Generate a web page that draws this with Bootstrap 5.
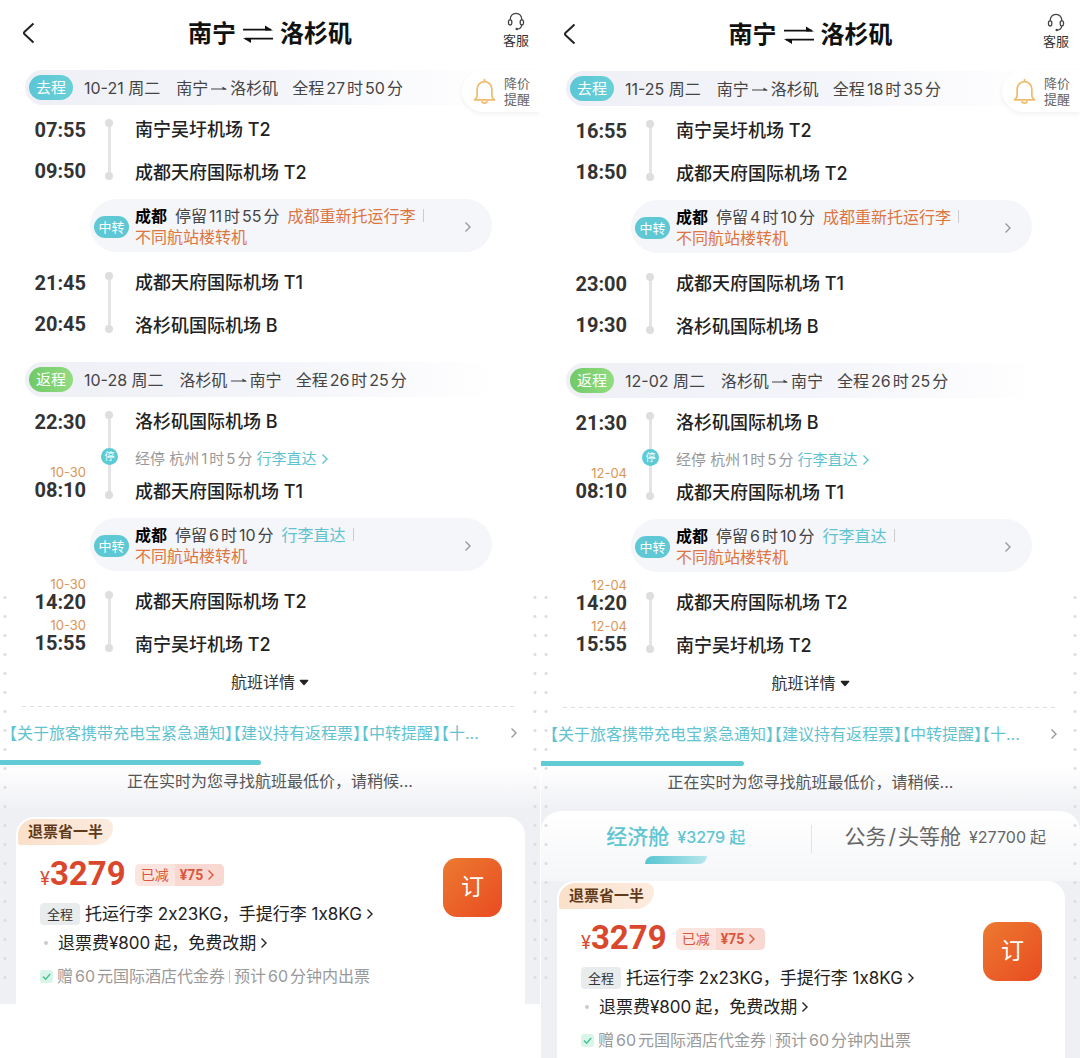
<!DOCTYPE html>
<html lang="zh-CN">
<head>
<meta charset="utf-8">
<meta name="viewport" content="width=device-width, initial-scale=1">
<title>南宁 ⇌ 洛杉矶</title>
<link href="https://cdn.jsdelivr.net/npm/bootstrap@5.3.0/dist/css/bootstrap.min.css" rel="stylesheet">
<style>
body{font-family:Inter,"Noto Sans CJK SC",sans-serif;font-size:16px;line-height:24px;color:#222;background:#fff}
a{color:inherit;text-decoration:none}
button{border:0;background:none;padding:0;color:inherit}
svg{display:block;flex:none}
.panel{overflow:hidden}
.panel-b{padding-top:1px;border-left:1px solid #fff}
.topbar{height:70px;padding:0 0 4px 22px}
.topbar h1{top:18px;gap:7px;font-size:24px;line-height:32px;font-weight:700;color:#111}
.service{right:11px;top:12px;font-size:13px;line-height:18px;color:#333}
.seg{height:35px;margin-left:25px;padding-left:4px;border-radius:18px 0 0 18px;background:linear-gradient(90deg,#eff0f6,#f4f5fa 50%,#fff 92%);color:#444}
.seg-tag{width:44px;height:25px;border-radius:13px;line-height:25px;font-size:15px;color:#fff;text-align:center;margin-right:11px}
.go{background:linear-gradient(90deg,#5cc6d6,#69d0d6)}
.back{background:linear-gradient(90deg,#70c968,#93dc80)}
.route{gap:3px;margin:0 14px 0 16px}
.n{margin:0 2px}
.alert-btn{right:0;top:70px;width:78px;height:42px;padding-left:11px;gap:8px;border-radius:21px 0 0 21px;background:#fff;box-shadow:0 2px 5px rgba(0,0,0,.06);font-size:13px;line-height:16px;color:#666}
.leg{margin-top:12px;min-height:69px}
.times{width:86px;padding:3px 0 5px;text-align:right}
.clock{font-family:Roboto,sans-serif;font-size:20px;line-height:20px;font-weight:700;color:#333}
.nextday{margin-top:-16px;font-size:13px;line-height:16px;color:#dc9556;display:block}
.rail{width:46px;padding:2px 0 6px}
.rail-line{width:3px;background:#e4e4e6}
.rail i{position:absolute;left:50%;width:8px;height:8px;margin-left:-4px;border-radius:50%;background:#dedee0}
.rail .dot-a{top:0}.rail .dot-b{bottom:0}
.rail .stop{top:37px;width:17px;height:17px;margin-left:-8px;background:#5bcbd6;color:#fff;font-style:normal;font-size:10px;line-height:17px;text-align:center}
.ports{padding-left:3px;font-size:18px;line-height:26px;font-weight:500;color:#222}
.via{font-size:15px;line-height:20px;font-weight:400;color:#999;margin:14px 0 10px}
.cy{color:#5fc3d0}
.or{color:#dd7540}
.grey-ic{color:#999}
.transfer{margin:13px 48px 0 90px;min-height:53px;padding:6px 20px 4px 4px;border-radius:27px;background:#f5f6fa;line-height:21px;color:#444}
.transfer+.leg{margin-top:18px}
.leg+.seg{margin-top:23px}
.t-tag{width:35px;height:22px;border-radius:11px;background:#5ec8d5;color:#fff;font-size:13px;line-height:22px;text-align:center;margin-right:6px}
.vr-thin{width:1px;height:13px;background:#ccc;display:inline-block;margin-left:7px}
.details{margin-top:14px;line-height:20px;color:#333}
.dash{height:1px;margin:14px 22px 0;background:repeating-linear-gradient(90deg,#ddd 0 4px,transparent 4px 8px)}
.notice{margin-top:14px;padding:0 22px 0 9px;font-feature-settings:"halt";white-space:nowrap}
.bar-track{height:5px;margin-top:15px;border-radius:0;background:none}
.bar-track .progress-bar{background:#62cbd5;border-radius:0 3px 3px 0}
.results{background:linear-gradient(#fff,#eff0f4 46px)}
.loading{margin-top:4px;color:#555}
.perf{background-image:radial-gradient(circle,#dcdde2 1px,transparent 2px),radial-gradient(circle,#dcdde2 1px,transparent 2px);background-size:8px 19px;background-repeat:repeat-y;background-position:1px 0,calc(100% - 1px) 0;top:588px;height:400px;left:0;right:0;pointer-events:none}
.fare{margin:0 15px 0 16px;padding:2px 23px 16px 24px;border-radius:18px 18px 0 0;background:#fff}
.panel-b .fare{padding-bottom:6px}
.fare-tag{margin-left:-22px;width:95px;height:26px;padding-left:10px;border-radius:16px 8px 18px 2px;background:linear-gradient(90deg,#fae0c9,#fcebdf);font-size:15px;line-height:26px;font-weight:700;color:#613a1b}
.price{margin-top:9px;line-height:40px;color:#d9482d}
.yen{font-size:18px;line-height:30px}
.amount{font-family:Roboto,sans-serif;font-size:33px;font-weight:700}
.off{height:22px;margin:2px 0 0 9px;border-radius:5px;background:#fce4df;font-size:14px;line-height:22px;color:#d9573c;overflow:hidden}
.off b{font-family:Roboto,sans-serif;font-size:14px}
.off-l{padding:0 6px}
.off-r{padding:0 9px 0 5px;background:#fad8d2}
.line-a{margin-top:8px;font-size:17px;color:#222}
.line-b{margin-top:5px;padding-left:4px;font-size:17px;color:#222}
.line-c{margin-top:9px;color:#999}
.whole{width:40px;height:22px;border-radius:4px;background:#e9ecec;font-size:13px;line-height:22px;text-align:center;color:#333;margin-right:5px}
.bullet{width:4px;height:4px;border-radius:50%;background:#ccc;margin-right:10px}
.book{right:23px;top:41px;width:59px;height:59px;border-radius:14px;background:linear-gradient(135deg,#ec7a30,#e94b22);color:#fff;font-size:23px;line-height:59px;text-align:center}
.loading-a{padding-bottom:24px}
.loading-b{padding-bottom:17px}
.cabins{border-radius:20px 20px 0 0;background:linear-gradient(#fff,#f5f6f8 70px)}
.cabin{height:70px;padding-bottom:18px;color:#666}
.cabin strong{font-size:21px;font-weight:500}
.cabin-off strong{font-weight:400}
.cabin-on{color:#5fc5d2}
.cabin-on::after{content:"";position:absolute;left:50%;top:45px;width:62px;height:8px;margin-left:-31px;border-radius:8px 0 8px 0;background:linear-gradient(90deg,#56c5d2,#b8e7ed)}
.cabin-off::before{content:"";position:absolute;left:0;top:14px;width:1px;height:28px;background:#e2e3e6}
</style>
<script src="https://cdn.jsdelivr.net/npm/bootstrap@5.3.0/dist/js/bootstrap.bundle.min.js"></script>
</head>
<body>
<svg width="0" height="0" class="position-absolute" aria-hidden="true">
<symbol id="chev" viewBox="0 0 8 12"><path d="M1.5 1.500l4.500 4.500-4.500 4.500" fill="none" stroke="currentColor" stroke-width="1.400"/></symbol>
<symbol id="prev" viewBox="0 0 13 22"><path d="M11.5 1.500L2.600 9.700q-1.400 1.300 0 2.600l8.900 8.200" fill="none" stroke="#222" stroke-width="2"/></symbol>
<symbol id="swap" viewBox="0 0 30 18"><path d="M0 4.700h28M2 13.700h28" fill="none" stroke="#111" stroke-width="1.700"/><path d="M22 .5l8 5h-8zM8 18l-8-5h8z" fill="#111"/></symbol>
<symbol id="to" viewBox="0 0 16 8"><path d="M0 5h15" stroke="currentColor" stroke-width="1"/><path d="M11.500 2.500l4.500 3h-4.500z" fill="currentColor"/></symbol>
<symbol id="head" viewBox="0 0 18 19"><path d="M3.200 8C3 3.800 5.500 1.300 9 1.300S15 3.800 14.800 8M14.800 13c-.5 2.600-2 4-4.300 4.100" fill="none" stroke="#444" stroke-width="1.300"/><rect x="1.500" y="7.800" width="3.300" height="5.200" rx="1.650" fill="none" stroke="#444" stroke-width="1.300"/><rect x="13.200" y="7.800" width="3.300" height="5.200" rx="1.650" fill="none" stroke="#444" stroke-width="1.300"/><circle cx="9.800" cy="17" r="1.300" fill="#444"/></symbol>
<symbol id="bell" viewBox="0 0 24 28"><path d="M12 1.500v2M1.500 22.700c1.700-1 2.800-2.200 2.800-4.200v-6.300c0-5 3.200-8.500 7.700-8.500s7.700 3.500 7.700 8.500v6.300c0 2 1.100 3.200 2.800 4.200z" fill="none" stroke="#efbb6c" stroke-width="1.800" stroke-linejoin="round" stroke-linecap="round"/><path d="M9.300 24c.3 2.700 5.100 2.700 5.400 0" fill="none" stroke="#efbb6c" stroke-width="1.800"/></symbol>
<symbol id="down" viewBox="0 0 10 7"><path d="M1.200.8h7.600q1 .3.300 1.200L5.800 5.800q-.8.800-1.600 0L.9 2Q.2 1.100 1.200.8z" fill="#222"/></symbol>
<symbol id="tick" viewBox="0 0 13 13"><rect width="13" height="13" rx="3" fill="#d9f5e9"/><path d="M3 6.500l2.700 2.700L10.200 4" fill="none" stroke="#49c194" stroke-width="1.400"/></symbol>
</svg>
<main class="row g-0 min-vh-100">

<section class="col-6 panel position-relative d-flex flex-column">
<header class="topbar d-flex align-items-center position-relative">
<button aria-label="返回"><svg width="13" height="22"><use href="#prev"/></svg></button>
<h1 class="position-absolute start-0 end-0 m-0 d-flex justify-content-center align-items-center pe-none">南宁<svg width="30" height="18"><use href="#swap"/></svg>洛杉矶</h1>
<button class="service position-absolute d-flex flex-column align-items-center"><svg width="18" height="19"><use href="#head"/></svg>客服</button>
</header>
<button class="alert-btn position-absolute d-flex align-items-center"><svg width="23" height="27"><use href="#bell"/></svg><span>降价<br>提醒</span></button>
<div class="seg d-flex align-items-center"><span class="seg-tag go">去程</span><span>10-21 周二</span><span class="route d-flex align-items-center">南宁<svg width="16" height="8"><use href="#to"/></svg>洛杉矶</span><span>全程<span class="n">27</span>时<span class="n">50</span>分</span></div>
<div class="leg d-flex">
<div class="times d-flex flex-column justify-content-between"><div class="clock">07:55</div><div class="clock">09:50</div></div>
<div class="rail d-flex"><div class="rail-line mx-auto position-relative"><i class="dot-a"></i><i class="dot-b"></i></div></div>
<div class="ports d-flex flex-column justify-content-between"><div>南宁吴圩机场 T2</div><div>成都天府国际机场 T2</div></div>
</div>
<a href="#" class="transfer d-flex align-items-center"><span class="t-tag">中转</span><span class="flex-grow-1"><b class="fw-bold text-black me-2">成都</b>停留<span class="n">11</span>时<span class="n">55</span>分<span class="or ms-2">成都重新托运行李</span><i class="vr-thin"></i><br><span class="or">不同航站楼转机</span></span><svg width="8" height="12" class="grey-ic"><use href="#chev"/></svg></a>
<div class="leg d-flex">
<div class="times d-flex flex-column justify-content-between"><div class="clock">21:45</div><div class="clock">20:45</div></div>
<div class="rail d-flex"><div class="rail-line mx-auto position-relative"><i class="dot-a"></i><i class="dot-b"></i></div></div>
<div class="ports d-flex flex-column justify-content-between"><div>成都天府国际机场 T1</div><div>洛杉矶国际机场 B</div></div>
</div>
<div class="seg d-flex align-items-center"><span class="seg-tag back">返程</span><span>10-28 周二</span><span class="route d-flex align-items-center">洛杉矶<svg width="16" height="8"><use href="#to"/></svg>南宁</span><span>全程<span class="n">26</span>时<span class="n">25</span>分</span></div>
<div class="leg d-flex">
<div class="times d-flex flex-column justify-content-between"><div class="clock">22:30</div><div><small class="nextday">10-30</small><div class="clock">08:10</div></div></div>
<div class="rail d-flex"><div class="rail-line mx-auto position-relative"><i class="dot-a"></i><i class="stop">停</i><i class="dot-b"></i></div></div>
<div class="ports"><div>洛杉矶国际机场 B</div><div class="via d-flex align-items-center">经停 杭州<span class="n">1</span>时<span class="n">5</span>分<a href="#" class="cy ms-1 d-flex align-items-center gap-1">行李直达<svg width="8" height="12"><use href="#chev"/></svg></a></div><div>成都天府国际机场 T1</div></div>
</div>
<a href="#" class="transfer d-flex align-items-center"><span class="t-tag">中转</span><span class="flex-grow-1"><b class="fw-bold text-black me-2">成都</b>停留<span class="n">6</span>时<span class="n">10</span>分<span class="cy ms-2">行李直达</span><i class="vr-thin"></i><br><span class="or">不同航站楼转机</span></span><svg width="8" height="12" class="grey-ic"><use href="#chev"/></svg></a>
<div class="leg d-flex">
<div class="times d-flex flex-column justify-content-between"><div><small class="nextday">10-30</small><div class="clock">14:20</div></div><div><small class="nextday">10-30</small><div class="clock">15:55</div></div></div>
<div class="rail d-flex"><div class="rail-line mx-auto position-relative"><i class="dot-a"></i><i class="dot-b"></i></div></div>
<div class="ports d-flex flex-column justify-content-between"><div>成都天府国际机场 T2</div><div>南宁吴圩机场 T2</div></div>
</div>
<button class="details d-flex align-items-center justify-content-center gap-1">航班详情<svg width="10" height="7"><use href="#down"/></svg></button>
<div class="dash"></div>
<a href="#" class="notice cy d-flex align-items-center justify-content-between"><span>【关于旅客携带充电宝紧急通知】【建议持有返程票】【中转提醒】【十...</span><svg width="8" height="12" class="grey-ic"><use href="#chev"/></svg></a>
<div class="progress bar-track" role="progressbar" aria-label="搜索进度" aria-valuenow="48" aria-valuemin="0" aria-valuemax="100"><div class="progress-bar" style="width:48.4%"></div></div>
<div class="results">
<div class="loading loading-a text-center">正在实时为您寻找航班最低价，请稍候...</div>
<article class="fare position-relative">
<div class="fare-tag">退票省一半</div>
<div class="price d-flex align-items-center"><span class="yen align-self-end">¥</span><span class="amount">3279</span><button class="off d-flex"><span class="off-l">已减</span><span class="off-r d-flex align-items-center gap-1"><b>¥75</b><svg width="8" height="12"><use href="#chev"/></svg></span></button></div>
<a href="#" class="line-a d-flex align-items-center"><span class="whole">全程</span>托运行李 2x23KG，手提行李 1x8KG<svg width="8" height="12" class="ms-1"><use href="#chev"/></svg></a>
<a href="#" class="line-b d-flex align-items-center"><span class="bullet"></span>退票费<span>¥800</span><span class="ms-1">起，免费改期</span><svg width="8" height="12" class="ms-1"><use href="#chev"/></svg></a>
<div class="line-c d-flex align-items-center"><svg width="13" height="13" class="me-1"><use href="#tick"/></svg>赠<span class="n">60</span>元国际酒店代金券<i class="vr-thin ms-1 me-1"></i>预计<span class="n">60</span>分钟内出票</div>
<button class="book position-absolute">订</button>
</article>
</div>
<div class="perf position-absolute"></div>
</section>

<section class="col-6 panel panel-b position-relative d-flex flex-column">
<header class="topbar d-flex align-items-center position-relative">
<button aria-label="返回"><svg width="13" height="22"><use href="#prev"/></svg></button>
<h1 class="position-absolute start-0 end-0 m-0 d-flex justify-content-center align-items-center pe-none">南宁<svg width="30" height="18"><use href="#swap"/></svg>洛杉矶</h1>
<button class="service position-absolute d-flex flex-column align-items-center"><svg width="18" height="19"><use href="#head"/></svg>客服</button>
</header>
<button class="alert-btn position-absolute d-flex align-items-center"><svg width="23" height="27"><use href="#bell"/></svg><span>降价<br>提醒</span></button>
<div class="seg d-flex align-items-center"><span class="seg-tag go">去程</span><span>11-25 周二</span><span class="route d-flex align-items-center">南宁<svg width="16" height="8"><use href="#to"/></svg>洛杉矶</span><span>全程<span class="n">18</span>时<span class="n">35</span>分</span></div>
<div class="leg d-flex">
<div class="times d-flex flex-column justify-content-between"><div class="clock">16:55</div><div class="clock">18:50</div></div>
<div class="rail d-flex"><div class="rail-line mx-auto position-relative"><i class="dot-a"></i><i class="dot-b"></i></div></div>
<div class="ports d-flex flex-column justify-content-between"><div>南宁吴圩机场 T2</div><div>成都天府国际机场 T2</div></div>
</div>
<a href="#" class="transfer d-flex align-items-center"><span class="t-tag">中转</span><span class="flex-grow-1"><b class="fw-bold text-black me-2">成都</b>停留<span class="n">4</span>时<span class="n">10</span>分<span class="or ms-2">成都重新托运行李</span><i class="vr-thin"></i><br><span class="or">不同航站楼转机</span></span><svg width="8" height="12" class="grey-ic"><use href="#chev"/></svg></a>
<div class="leg d-flex">
<div class="times d-flex flex-column justify-content-between"><div class="clock">23:00</div><div class="clock">19:30</div></div>
<div class="rail d-flex"><div class="rail-line mx-auto position-relative"><i class="dot-a"></i><i class="dot-b"></i></div></div>
<div class="ports d-flex flex-column justify-content-between"><div>成都天府国际机场 T1</div><div>洛杉矶国际机场 B</div></div>
</div>
<div class="seg d-flex align-items-center"><span class="seg-tag back">返程</span><span>12-02 周二</span><span class="route d-flex align-items-center">洛杉矶<svg width="16" height="8"><use href="#to"/></svg>南宁</span><span>全程<span class="n">26</span>时<span class="n">25</span>分</span></div>
<div class="leg d-flex">
<div class="times d-flex flex-column justify-content-between"><div class="clock">21:30</div><div><small class="nextday">12-04</small><div class="clock">08:10</div></div></div>
<div class="rail d-flex"><div class="rail-line mx-auto position-relative"><i class="dot-a"></i><i class="stop">停</i><i class="dot-b"></i></div></div>
<div class="ports"><div>洛杉矶国际机场 B</div><div class="via d-flex align-items-center">经停 杭州<span class="n">1</span>时<span class="n">5</span>分<a href="#" class="cy ms-1 d-flex align-items-center gap-1">行李直达<svg width="8" height="12"><use href="#chev"/></svg></a></div><div>成都天府国际机场 T1</div></div>
</div>
<a href="#" class="transfer d-flex align-items-center"><span class="t-tag">中转</span><span class="flex-grow-1"><b class="fw-bold text-black me-2">成都</b>停留<span class="n">6</span>时<span class="n">10</span>分<span class="cy ms-2">行李直达</span><i class="vr-thin"></i><br><span class="or">不同航站楼转机</span></span><svg width="8" height="12" class="grey-ic"><use href="#chev"/></svg></a>
<div class="leg d-flex">
<div class="times d-flex flex-column justify-content-between"><div><small class="nextday">12-04</small><div class="clock">14:20</div></div><div><small class="nextday">12-04</small><div class="clock">15:55</div></div></div>
<div class="rail d-flex"><div class="rail-line mx-auto position-relative"><i class="dot-a"></i><i class="dot-b"></i></div></div>
<div class="ports d-flex flex-column justify-content-between"><div>成都天府国际机场 T2</div><div>南宁吴圩机场 T2</div></div>
</div>
<button class="details d-flex align-items-center justify-content-center gap-1">航班详情<svg width="10" height="7"><use href="#down"/></svg></button>
<div class="dash"></div>
<a href="#" class="notice cy d-flex align-items-center justify-content-between"><span>【关于旅客携带充电宝紧急通知】【建议持有返程票】【中转提醒】【十...</span><svg width="8" height="12" class="grey-ic"><use href="#chev"/></svg></a>
<div class="progress bar-track" role="progressbar" aria-label="搜索进度" aria-valuenow="38" aria-valuemin="0" aria-valuemax="100"><div class="progress-bar" style="width:37.6%"></div></div>
<div class="results flex-grow-1 d-flex flex-column">
<div class="loading loading-b text-center">正在实时为您寻找航班最低价，请稍候...</div>
<div class="cabins d-flex">
<button class="cabin cabin-on w-50 position-relative d-flex align-items-center justify-content-center gap-2"><strong>经济舱</strong><span class="fw-medium">¥3279<span class="ms-1">起</span></span></button>
<button class="cabin cabin-off w-50 position-relative d-flex align-items-center justify-content-center gap-2"><strong>公务<span class="n">/</span>头等舱</strong><span>¥27700<span class="ms-1">起</span></span></button>
</div>
<article class="fare position-relative flex-grow-1">
<div class="fare-tag">退票省一半</div>
<div class="price d-flex align-items-center"><span class="yen align-self-end">¥</span><span class="amount">3279</span><button class="off d-flex"><span class="off-l">已减</span><span class="off-r d-flex align-items-center gap-1"><b>¥75</b><svg width="8" height="12"><use href="#chev"/></svg></span></button></div>
<a href="#" class="line-a d-flex align-items-center"><span class="whole">全程</span>托运行李 2x23KG，手提行李 1x8KG<svg width="8" height="12" class="ms-1"><use href="#chev"/></svg></a>
<a href="#" class="line-b d-flex align-items-center"><span class="bullet"></span>退票费<span>¥800</span><span class="ms-1">起，免费改期</span><svg width="8" height="12" class="ms-1"><use href="#chev"/></svg></a>
<div class="line-c d-flex align-items-center"><svg width="13" height="13" class="me-1"><use href="#tick"/></svg>赠<span class="n">60</span>元国际酒店代金券<i class="vr-thin ms-1 me-1"></i>预计<span class="n">60</span>分钟内出票</div>
<button class="book position-absolute">订</button>
</article>
</div>
<div class="perf position-absolute"></div>
</section>
</main>
</body>
</html>
